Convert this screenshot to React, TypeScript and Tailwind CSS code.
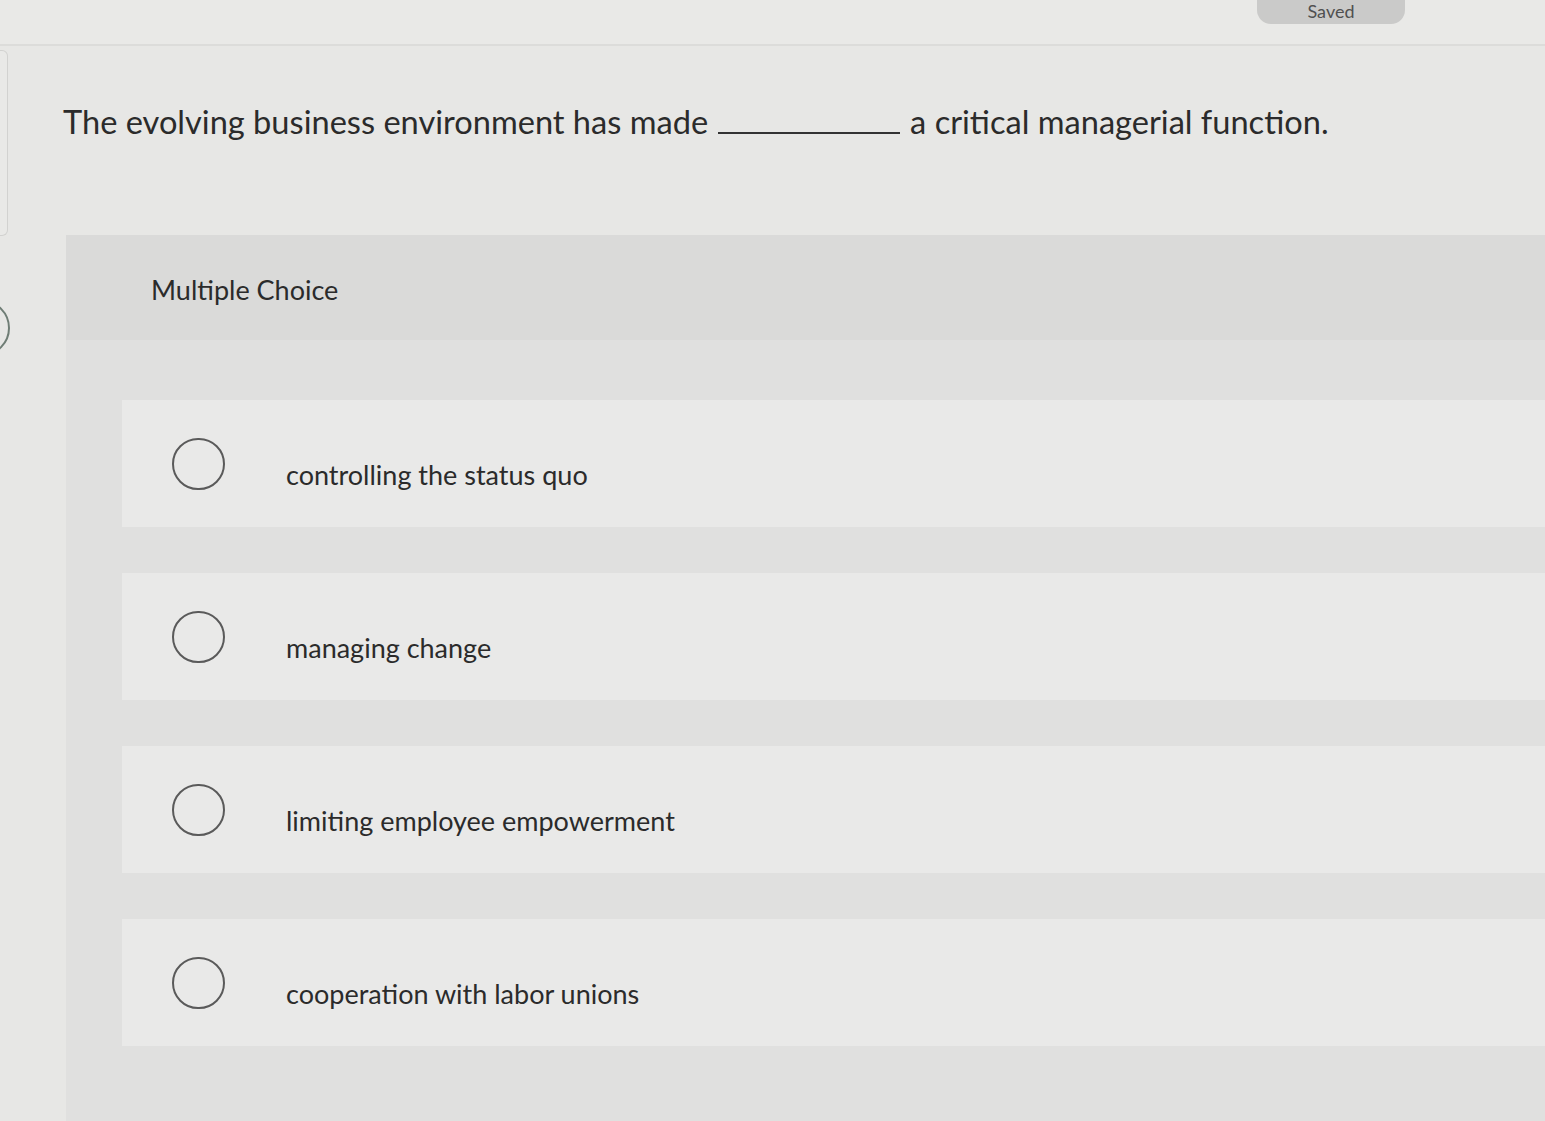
import React from "react";

const options = [
  "controlling the status quo",
  "managing change",
  "limiting employee empowerment",
  "cooperation with labor unions",
];

function Radio() {
  return (
    <div className="w-[53px] h-[52px] shrink-0 rounded-full border-2 border-[#5a5a5a]" />
  );
}

export default function App() {
  return (
    <div
      className="w-full h-[1121px] overflow-hidden bg-[#e7e7e5] text-[#2b2b2b] flex flex-col"
      style={{ fontFamily: "Lato, 'Open Sans', sans-serif" }}
    >
      {/* top strip */}
      <div className="h-[46px] shrink-0 border-b-2 border-[#dcdcda] bg-[#e9e9e7] flex justify-end pr-[140px]">
        <div className="w-[148px] h-[26px] -mt-[2px] rounded-b-[14px] bg-[#cacac9] flex items-center justify-center">
          <span className="text-[18px] leading-[20px] text-[#505050]">Saved</span>
        </div>
      </div>

      <div className="flex flex-1 min-h-0">
        {/* left column */}
        <div className="w-[66px] shrink-0 flex flex-col">
          <div className="w-[8px] h-[186px] mt-[4px] border-y border-r border-[#d2d2d0] rounded-r-[6px] bg-[#e9e9e7]" />
          <div className="mt-[64px] -ml-[46px] w-[56px] h-[56px] rounded-full border-2 border-[#6f7d75]" />
        </div>

        {/* content column */}
        <div className="flex-1 flex flex-col min-w-0">
          <div className="h-[189px] shrink-0 -ml-[3px] pt-[55px]">
            <p className="text-[32.6px] leading-[42px] whitespace-nowrap">
              The evolving business environment has made
              <span className="inline-block w-[182px] border-b-2 border-[#333] align-baseline mx-[10px]" />
              a critical managerial function.
            </p>
          </div>

          <div className="flex-1 flex flex-col bg-[#e0e0df]">
            <div className="h-[105px] shrink-0 bg-[#dadad9] pl-[85px] pt-[37px]">
              <span className="text-[27px] leading-[36px]">Multiple Choice</span>
            </div>
            <div className="flex flex-col gap-[46px] pt-[60px] pl-[56px]">
              {options.map((o) => (
                <div
                  key={o}
                  className="h-[127px] bg-[#e9e9e8] flex items-center pl-[50px] gap-[61px]"
                >
                  <Radio />
                  <span className="text-[27px] leading-[36px] mt-[22px]">{o}</span>
                </div>
              ))}
            </div>
          </div>
        </div>
      </div>
    </div>
  );
}
